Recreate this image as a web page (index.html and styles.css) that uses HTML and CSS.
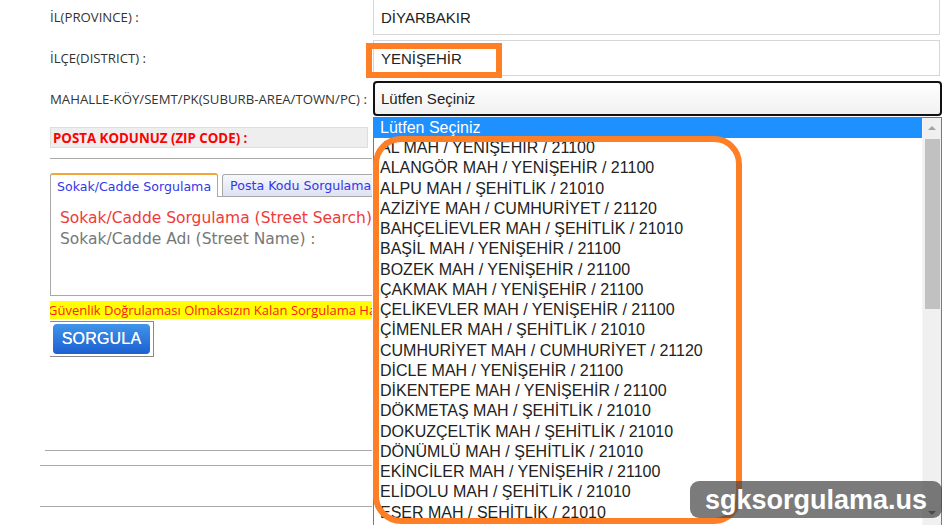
FILE: index.html
```html
<!DOCTYPE html>
<html lang="tr">
<head>
<meta charset="utf-8">
<title>Posta Kodu Sorgulama</title>
<link rel="stylesheet" href="styles.css">
</head>
<body>
<div class="page">
  <div class="form">
    <div class="row r1">
      <div class="label">İL(PROVINCE) :</div>
      <div class="field">DİYARBAKIR</div>
    </div>
    <div class="row r2">
      <div class="label">İLÇE(DISTRICT) :</div>
      <div class="field">YENİŞEHİR</div>
    </div>
    <div class="row r3">
      <div class="label">MAHALLE-KÖY/SEMT/PK(SUBURB-AREA/TOWN/PC) :</div>
      <div class="select">Lütfen Seçiniz</div>
    </div>
  </div>

  <div class="lower">
    <div class="zip">POSTA KODUNUZ (ZIP CODE) :</div>
    <div class="rule rule-a"></div>
    <div class="tabs">
      <div class="tab active">Sokak/Cadde Sorgulama</div>
      <div class="tab">Posta Kodu Sorgulama</div>
    </div>
    <div class="panel">
      <div class="panel-title">Sokak/Cadde Sorgulama (Street Search)</div>
      <div class="panel-sub">Sokak/Cadde Adı (Street Name) :</div>
    </div>
    <div class="warn">Güvenlik Doğrulaması Olmaksızın Kalan Sorgulama Hakkınız</div>
    <div class="btn-frame"><div class="btn">SORGULA</div></div>
  </div>

  <div class="bottom-lines">
    <div class="rule rule-b"></div>
    <div class="rule rule-c"></div>
    <div class="rule rule-d"></div>
  </div>

  <div class="dropdown">
    <div class="options">
      <div class="opt selected">Lütfen Seçiniz</div>
      <div class="opt">AL MAH / YENİŞEHİR / 21100</div>
      <div class="opt">ALANGÖR MAH / YENİŞEHİR / 21100</div>
      <div class="opt">ALPU MAH / ŞEHİTLİK / 21010</div>
      <div class="opt">AZİZİYE MAH / CUMHURİYET / 21120</div>
      <div class="opt">BAHÇELİEVLER MAH / ŞEHİTLİK / 21010</div>
      <div class="opt">BAŞİL MAH / YENİŞEHİR / 21100</div>
      <div class="opt">BOZEK MAH / YENİŞEHİR / 21100</div>
      <div class="opt">ÇAKMAK MAH / YENİŞEHİR / 21100</div>
      <div class="opt">ÇELİKEVLER MAH / YENİŞEHİR / 21100</div>
      <div class="opt">ÇİMENLER MAH / ŞEHİTLİK / 21010</div>
      <div class="opt">CUMHURİYET MAH / CUMHURİYET / 21120</div>
      <div class="opt">DİCLE MAH / YENİŞEHİR / 21100</div>
      <div class="opt">DİKENTEPE MAH / YENİŞEHİR / 21100</div>
      <div class="opt">DÖKMETAŞ MAH / ŞEHİTLİK / 21010</div>
      <div class="opt">DOKUZÇELTİK MAH / ŞEHİTLİK / 21010</div>
      <div class="opt">DÖNÜMLÜ MAH / ŞEHİTLİK / 21010</div>
      <div class="opt">EKİNCİLER MAH / YENİŞEHİR / 21100</div>
      <div class="opt">ELİDOLU MAH / ŞEHİTLİK / 21010</div>
      <div class="opt">ESER MAH / ŞEHİTLİK / 21010</div>
    </div>
    <div class="scrollbar">
      <div class="arrow-up"></div>
      <div class="thumb"></div>
      <div class="arrow-down"></div>
    </div>
  </div>

  <div class="mark-district"></div>
  <div class="mark-list"></div>
  <div class="watermark">sgksorgulama.us</div>
</div>
</body>
</html>
```

FILE: styles.css
```css
* { box-sizing: border-box; }
html, body { margin: 0; padding: 0; background: #fff; }
body { width: 945px; height: 525px; overflow: hidden; font-family: "Open Sans", "Liberation Sans", sans-serif; }

.page { position: relative; width: 945px; height: 525px; overflow: hidden; }

.form { padding-left: 50px; margin-top: -1px; display: flex; flex-direction: column; gap: 5px; }
.row { display: grid; grid-template-columns: 323px 567px; align-items: center; }
.label { font-size: 13.2px; color: #333; white-space: nowrap; }
.field {
  height: 36px; border: 1px solid #d6d6d6; padding: 0 7px;
  display: flex; align-items: center;
  font-family: "Liberation Sans", Arial, sans-serif; font-size: 15px; color: #222;
}
.r3 { grid-template-columns: 323px 569px; }
.select {
  height: 35px; border: 2px solid #111; border-radius: 4px; padding: 0 6px;
  display: flex; align-items: center;
  background: linear-gradient(#ffffff, #f1f1f1);
  font-family: "Liberation Sans", Arial, sans-serif; font-size: 15px; color: #222;
}

.lower { width: 322px; margin-left: 50px; margin-top: 11px; overflow: hidden; }
.zip {
  height: 21px; width: 318px; background: #eeeeee; border: 1px solid #dddddd;
  padding-left: 2px; display: flex; align-items: center;
  color: #ff0000; font-weight: 700; font-size: 13.3px; white-space: nowrap;
}
.rule { height: 1px; background: #a9a9a9; }
.rule-a { margin-top: 10px; margin-left: -5px; }

.tabs { display: flex; gap: 4px; margin-top: 13px; height: 24px; align-items: flex-end; }
.tab {
  font-family: "DejaVu Sans", Verdana, sans-serif; font-size: 12.6px; color: #3636e8;
  height: 22px; padding: 0 7px; display: flex; align-items: center; white-space: nowrap; flex-shrink: 0;
  border: 1px solid #a8a8a8; border-bottom: none; border-radius: 3px 3px 0 0;
  background: linear-gradient(#f7f8fd, #dde1f2);
}
.tab.active {
  height: 24px; background: #fff; border-top: 2px solid #f2a638; padding: 0 6px;
  margin-bottom: -1px; position: relative; z-index: 1;
}
.panel {
  height: 100px; border: 1px solid #a8a8a8; width: 323px;
  padding: 11px 0 0 9px;
  font-family: "DejaVu Sans", Verdana, sans-serif; font-size: 15.5px; line-height: 21px; white-space: nowrap;
}
.panel-title { color: #f03a3a; }
.panel-sub { color: #777; }

.warn {
  margin-top: 5px; margin-left: -2px; height: 18px; background: #ffff00; color: #ff1a1a;
  font-size: 13px; line-height: 18px; white-space: nowrap; overflow: hidden;
}
.btn-frame {
  margin-top: 2px; margin-left: -1px; width: 105px; height: 36px;
  border: 1px solid #8a8a8a; padding: 2px 3px;
}
.btn {
  height: 100%; border-radius: 4px;
  background: linear-gradient(#3f95ea, #1c60d2);
  color: #fff; font-family: "Liberation Sans", Arial, sans-serif; font-size: 16px;
  display: flex; align-items: center; justify-content: center; letter-spacing: 0.2px;
  text-shadow: 0 0 0.4px #fff;
}

.bottom-lines { width: 332px; margin-left: 40px; margin-top: 93px; }
.rule-b { margin-left: 5px; }
.rule-c { margin-top: 14px; }
.rule-d { margin-top: 40px; }

.dropdown {
  position: absolute; left: 373px; top: 117px; width: 569px; height: 420px;
  border: 1px solid #7a7a7a; background: #fff; display: flex;
}
.options { flex: 1; font-family: "Liberation Sans", Arial, sans-serif; font-size: 16px; color: #222; }
.opt { height: 20.25px; line-height: 20.25px; padding-left: 6px; white-space: nowrap; }
.opt.selected { height: 20px; line-height: 19px; background: #1e90ff; color: #fff; }
.scrollbar { width: 19px; background: #f0f0f0; position: relative; border-left: 1px solid #f5f5f5; }
.arrow-up {
  position: absolute; left: 5px; top: 8px; width: 0; height: 0;
  border-left: 4px solid transparent; border-right: 4px solid transparent; border-bottom: 4px solid #a3a3a3;
}
.thumb { position: absolute; left: 2px; top: 21px; width: 15px; height: 170px; background: #c1c1c1; }
.arrow-down {
  position: absolute; left: 5px; top: 393px; width: 0; height: 0;
  border-left: 4px solid transparent; border-right: 4px solid transparent; border-top: 4px solid #505050;
}

.mark-district {
  position: absolute; left: 366px; top: 43px; width: 136px; height: 35px;
  border: 6px solid #ff7f27;
}
.mark-list {
  position: absolute; left: 373px; top: 136px; width: 369px; height: 388px;
  border: 6px solid #ff7f27; border-radius: 28px;
}
.watermark {
  position: absolute; left: 690px; top: 481px; width: 252px; height: 37px;
  border-radius: 9px; background: rgba(72, 72, 72, 0.72);
  color: #fff; font-family: "Liberation Sans", Arial, sans-serif; font-weight: 700; font-size: 27px;
  display: flex; align-items: center; justify-content: center; padding-top: 1px;
}
```
